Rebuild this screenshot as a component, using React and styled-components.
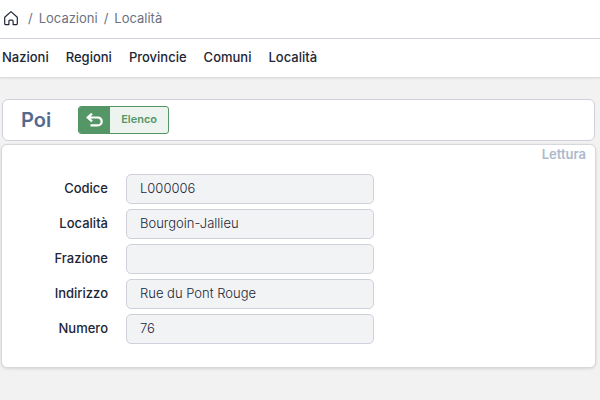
import styled, { createGlobalStyle } from "styled-components";

const colors = {
  text: "#212636",
  muted: "#6b7180",
  title: "#536a8e",
  hint: "#acb9cb",
  border: "#cfd1da",
  page: "#f2f2f2",
  field: "#f2f3f5",
  green: "#559667",
  greenLight: "#edf4ef",
};

const GlobalStyle = createGlobalStyle`
  * {
    box-sizing: border-box;
  }

  body {
    margin: 0;
    background: ${colors.page};
    color: ${colors.text};
    font-family: Inter, "Liberation Sans", sans-serif;
    font-size: 13px;
    line-height: 20px;
  }
`;

const Header = styled.header`
  background: #fff;
  border-bottom: 1px solid #dcdcde;
  box-shadow: 0 1px 2px rgba(0, 0, 0, 0.06);
`;

const Breadcrumb = styled.nav`
  display: flex;
  align-items: center;
  gap: 6px;
  padding: 8px 4px 10px;
  border-bottom: 1px solid ${colors.border};
  color: ${colors.muted};
`;

const Crumb = styled.a`
  display: flex;
  color: inherit;
  text-decoration: none;
`;

const HomeLink = styled(Crumb)`
  margin-right: 4px;
  color: ${colors.text};
`;

const Menu = styled.nav`
  display: flex;
  gap: 17px;
  padding: 8px 2px 10px;
`;

const MenuLink = styled.a`
  color: inherit;
  font-weight: 500;
  text-decoration: none;
`;

const Main = styled.main`
  display: flex;
  flex-direction: column;
  gap: 3px;
  padding: 21px 4px 32px 1px;
`;

const TitleBar = styled.section`
  display: flex;
  align-items: center;
  gap: 27px;
  margin: 0 1px;
  padding: 6px 18px;
  background: #fff;
  border: 1px solid ${colors.border};
  border-radius: 6px;
`;

const Title = styled.h1`
  margin: 0;
  color: ${colors.title};
  font-size: 20px;
  font-weight: 600;
  line-height: 28px;
`;

const ListButton = styled.button`
  display: flex;
  height: 28px;
  padding: 0;
  overflow: hidden;
  background: ${colors.greenLight};
  border: 1px solid ${colors.green};
  border-radius: 3px;
  color: ${colors.green};
  font-family: inherit;
  font-size: 11px;
  font-weight: 600;
  line-height: 24px;
  cursor: pointer;
`;

const ButtonIcon = styled.span`
  display: flex;
  align-items: center;
  justify-content: center;
  align-self: stretch;
  width: 31px;
  background: ${colors.green};
  color: #fff;
`;

const ButtonText = styled.span`
  padding: 0 11px;
`;

const Panel = styled.section`
  padding: 0 9px 23px;
  background: #fff;
  border: 1px solid #d8d8da;
  border-radius: 6px;
  box-shadow: 0 1px 3px rgba(0, 0, 0, 0.12);
`;

const Mode = styled.p`
  margin: 0;
  color: ${colors.hint};
  font-weight: 600;
  line-height: 18px;
  text-align: right;
`;

const Form = styled.form`
  display: flex;
  flex-direction: column;
  gap: 5px;
  padding-top: 11px;
`;

const Row = styled.div`
  display: flex;
  align-items: center;
  gap: 18px;
`;

const Label = styled.label`
  width: 97px;
  padding-bottom: 2px;
  font-weight: 500;
  text-align: right;
`;

const Input = styled.input`
  width: 248px;
  height: 30px;
  padding: 0 13px 2px;
  background: ${colors.field};
  border: 1px solid ${colors.border};
  border-radius: 5px;
  color: ${colors.text};
  font-family: inherit;
  font-size: 13px;
  font-weight: 300;
  outline: none;
`;

const HomeIcon = () => (
  <svg width="14" height="16" viewBox="0 0 14 16" fill="none" stroke="currentColor" strokeWidth="1.2" strokeLinejoin="round" aria-hidden="true">
    <path d="M.7 7.2 7 1.6l6.3 5.6v6.6c0 .5-.3.8-.8.8H9.1v-3.4c0-.6-.4-1-1-1H5.9c-.6 0-1 .4-1 1v3.4H1.5c-.5 0-.8-.3-.8-.8z" />
  </svg>
);

const BackIcon = () => (
  <svg width="18" height="14" viewBox="0 0 18 14" fill="none" stroke="currentColor" strokeWidth="2.2" aria-hidden="true">
    <path d="M6 .6 1.7 4.5 6 8.4M2 4.5h9.8a3.9 3.9 0 0 1 0 7.8H4.5" />
  </svg>
);

const menu = ["Nazioni", "Regioni", "Provincie", "Comuni", "Località"];

const fields = [
  { id: "codice", label: "Codice", value: "L000006" },
  { id: "localita", label: "Località", value: "Bourgoin-Jallieu" },
  { id: "frazione", label: "Frazione", value: "" },
  { id: "indirizzo", label: "Indirizzo", value: "Rue du Pont Rouge" },
  { id: "numero", label: "Numero", value: "76" },
];

export default function App() {
  return (
    <>
      <GlobalStyle />
      <Header>
        <Breadcrumb>
          <HomeLink href="#" aria-label="Home">
            <HomeIcon />
          </HomeLink>
          <span>/</span>
          <Crumb href="#locazioni">Locazioni</Crumb>
          <span>/</span>
          <Crumb href="#localita">Località</Crumb>
        </Breadcrumb>
        <Menu>
          {menu.map((item) => (
            <MenuLink key={item} href={`#${item.toLowerCase()}`}>
              {item}
            </MenuLink>
          ))}
        </Menu>
      </Header>
      <Main>
        <TitleBar>
          <Title>Poi</Title>
          <ListButton type="button">
            <ButtonIcon>
              <BackIcon />
            </ButtonIcon>
            <ButtonText>Elenco</ButtonText>
          </ListButton>
        </TitleBar>
        <Panel>
          <Mode>Lettura</Mode>
          <Form>
            {fields.map(({ id, label, value }) => (
              <Row key={id}>
                <Label htmlFor={id}>{label}</Label>
                <Input id={id} value={value} readOnly />
              </Row>
            ))}
          </Form>
        </Panel>
      </Main>
    </>
  );
}
